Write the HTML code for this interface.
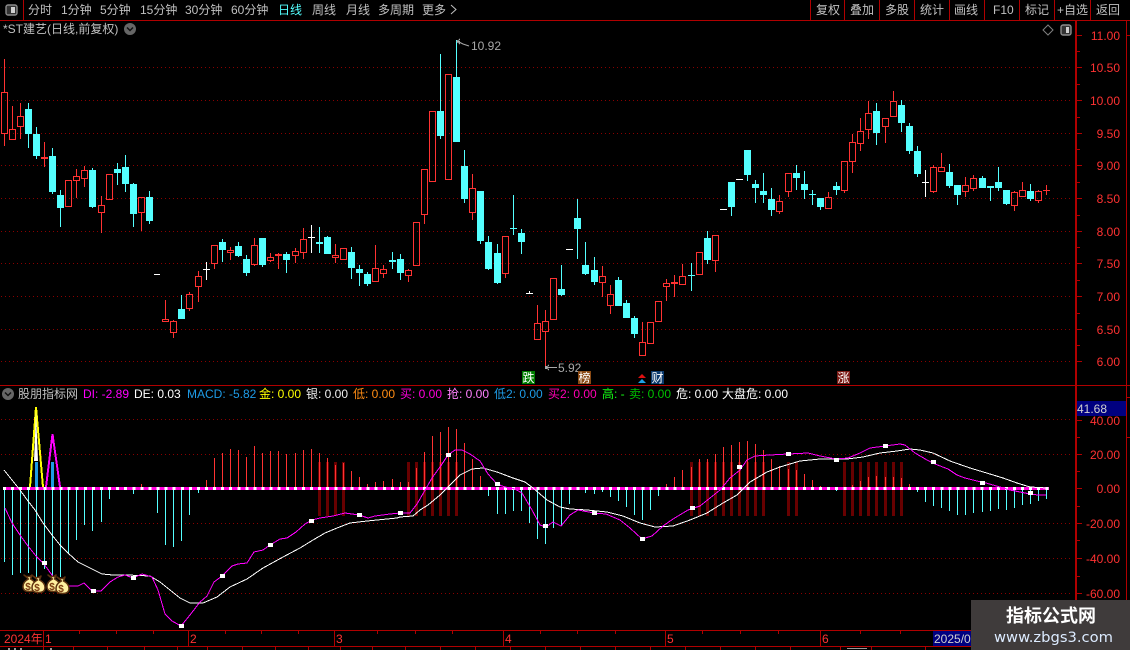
<!DOCTYPE html>
<html lang="zh"><head><meta charset="utf-8"><title>*ST建艺</title>
<style>
html,body{margin:0;padding:0;background:#000;width:1130px;height:650px;overflow:hidden}
svg{display:block;font-family:"Liberation Sans","Noto Sans CJK SC",sans-serif;font-size:12px}
.c{shape-rendering:crispEdges}
</style></head><body>
<svg width="1130" height="650" viewBox="0 0 1130 650" xmlns="http://www.w3.org/2000/svg">
<rect width="1130" height="650" fill="#000"/>

<!-- grid -->
<g class="c" stroke="#8a0000" stroke-width="1" stroke-dasharray="1 3" fill="none">
<path d="M1 67.5H1072M1 100.5H1072M1 133.5H1072M1 165.5H1072M1 198.5H1072M1 231.5H1072M1 263.5H1072M1 296.5H1072M1 329.5H1072M1 361.5H1072"/>
<path d="M1 419.5H1072M1 454.5H1072M1 523.5H1072M1 558.5H1072M1 593.5H1072"/>
</g>

<!-- candles: cyan -->
<g class="c">
<path stroke="#54ffff" fill="none" d="M28.5 103V148M36.5 127V159M52.5 148V194M60.5 190V227M92.5 168V208M117.5 163V185M125.5 155V192M133.5 183V227M149.5 191V224M181.5 295V319M222.5 239V262M238.5 242V257M246.5 255V276M262.5 238V267M286.5 252V273M319.5 227V253M327.5 236V254M351.5 247V279M359.5 265V286M367.5 272V286M392.5 252V269M400.5 254V280M440.5 54V139M456.5 40V142M464.5 150V203M480.5 191V244M488.5 236V270M497.5 244V284M513.5 195V235M510 228.5H517M521.5 229V254M561.5 265V296M577.5 199V259M585.5 242V275M594.5 257V285M618.5 277V306M626.5 300V318M634.5 316V338M691.5 263V291M688 275.5H695M707.5 231V264M731.5 182V216M747.5 150V181M755.5 180V203M763.5 173V203M771.5 188V216M796.5 165V190M804.5 171V199M812.5 190V205M809 194.5H816M820.5 198V210M836.5 182V195M876.5 103V145M901.5 100V132M909.5 123V154M917.5 146V177M949.5 164V188M957.5 185V205M982.5 176V188M990.5 186V201M998.5 167V191M1006.5 190V205M1030.5 184V201"/>
<path fill="#54ffff" d="M25 109H32V134H25ZM33 134H40V156H33ZM49 156H56V192H49ZM57 195H64V208H57ZM89 170H96V207H89ZM114 169H121V173H114ZM122 167H129V184H122ZM130 184H137V214H130ZM146 197H153V221H146ZM178 309H185V319H178ZM219 242H226V250H219ZM235 246H242V256H235ZM243 259H250V273H243ZM259 238H266V265H259ZM283 254H290V260H283ZM316 242H323V244H316ZM324 237H331V254H324ZM348 252H355V268H348ZM356 269H363V273H356ZM364 274H371V284H364ZM389 260H396V262H389ZM397 259H404V273H397ZM437 111H444V136H437ZM453 77H460V142H453ZM461 166H468V199H461ZM477 191H484V241H477ZM485 242H492V269H485ZM494 253H501V283H494ZM518 233H525V242H518ZM558 289H565V295H558ZM574 218H581V229H574ZM582 265H589V274H582ZM591 270H598V282H591ZM615 280H622V306H615ZM623 303H630V318H623ZM631 318H638V334H631ZM704 238H711V260H704ZM728 182H735V207H728ZM744 150H751V175H744ZM752 184H759V188H752ZM760 191H767V195H760ZM768 199H775V210H768ZM793 173H800V178H793ZM801 184H808V190H801ZM817 198H824V207H817ZM833 186H840V190H833ZM873 111H880V133H873ZM898 105H905V123H898ZM906 126H913V151H906ZM914 151H921V174H914ZM946 172H953V186H946ZM954 185H961V195H954ZM979 178H986V188H979ZM987 186H994V188H987ZM995 182H1002V188H995ZM1003 190H1010V204H1003ZM1027 191H1034V199H1027Z"/>
<!-- white doji -->
<path stroke="#fff" fill="none" d="M154 274.5H160M206.5 262V280M203 269.5H210M311.5 225V253M308 237.5H315M529.5 291V294M526 293.5H533M566 249.5H573M720 209.5H727M736 179.5H743M925.5 170V197M922 182.5H929"/>
<!-- red -->
<path stroke="#ff3232" fill="none" d="M4.5 59V92M4.5 134V146M1.5 92.5H7.5V133.5H1.5ZM12.5 106V129M9.5 129.5H15.5V139.5H9.5ZM20.5 103V116M20.5 127V139M17.5 116.5H23.5V126.5H17.5ZM44.5 142V157M44.5 159V167M41.5 157.5H47.5V158.5H41.5ZM65.5 180.5H71.5V206.5H65.5ZM76.5 169V176M76.5 181V198M73.5 176.5H79.5V180.5H73.5ZM84.5 166V170M84.5 179V187M81.5 170.5H87.5V178.5H81.5ZM101.5 196V205M101.5 213V233M98.5 205.5H104.5V212.5H98.5ZM106.5 174.5H112.5V199.5H106.5ZM141.5 213V231M138.5 197.5H144.5V212.5H138.5ZM165.5 300V319M162.5 319.5H168.5V321.5H162.5ZM173.5 320V321M173.5 333V338M170.5 321.5H176.5V332.5H170.5ZM189.5 292V294M189.5 309V311M186.5 294.5H192.5V308.5H186.5ZM198.5 271V276M198.5 287V302M195.5 276.5H201.5V286.5H195.5ZM214.5 264V269M211.5 245.5H217.5V263.5H211.5ZM230.5 247V250M230.5 253V260M227.5 250.5H233.5V252.5H227.5ZM254.5 238V245M254.5 265V266M251.5 245.5H257.5V264.5H251.5ZM270.5 253V257M270.5 261V262M267.5 257.5H273.5V260.5H267.5ZM278.5 253V254M278.5 256V269M275.5 254.5H281.5V255.5H275.5ZM295.5 248V251M295.5 256V263M292.5 251.5H298.5V255.5H292.5ZM303.5 228V239M303.5 253V259M300.5 239.5H306.5V252.5H300.5ZM335.5 244V255M335.5 258V263M332.5 255.5H338.5V257.5H332.5ZM340.5 248.5H346.5V259.5H340.5ZM375.5 245V268M372.5 268.5H378.5V281.5H372.5ZM383.5 265V269M383.5 274V278M380.5 269.5H386.5V273.5H380.5ZM408.5 269V270M408.5 276V282M405.5 270.5H411.5V275.5H405.5ZM413.5 222.5H419.5V265.5H413.5ZM424.5 215V224M421.5 169.5H427.5V214.5H421.5ZM429.5 111.5H435.5V181.5H429.5ZM445.5 74.5H451.5V179.5H445.5ZM472.5 174V188M472.5 213V220M469.5 188.5H475.5V212.5H469.5ZM505.5 274V278M502.5 236.5H508.5V273.5H502.5ZM537.5 305V323M534.5 323.5H540.5V339.5H534.5ZM545.5 310V321M545.5 332V367M542.5 321.5H548.5V331.5H542.5ZM550.5 278.5H556.5V319.5H550.5ZM602.5 266V276M602.5 283V297M599.5 276.5H605.5V282.5H599.5ZM610.5 285V294M610.5 306V314M607.5 294.5H613.5V305.5H607.5ZM642.5 322V342M639.5 342.5H645.5V355.5H639.5ZM647.5 322.5H653.5V343.5H647.5ZM655.5 301.5H661.5V321.5H655.5ZM666.5 279V283M666.5 287V301M663.5 283.5H669.5V286.5H663.5ZM674.5 275V282M674.5 284V297M671.5 282.5H677.5V283.5H671.5ZM682.5 264V276M679.5 276.5H685.5V284.5H679.5ZM696.5 252.5H702.5V274.5H696.5ZM715.5 261V272M712.5 235.5H718.5V260.5H712.5ZM779.5 195V201M779.5 212V214M776.5 201.5H782.5V211.5H776.5ZM788.5 192V197M785.5 173.5H791.5V191.5H785.5ZM828.5 192V197M825.5 197.5H831.5V208.5H825.5ZM844.5 191V193M841.5 161.5H847.5V190.5H841.5ZM852.5 134V142M852.5 162V173M849.5 142.5H855.5V161.5H849.5ZM860.5 118V131M860.5 144V151M857.5 131.5H863.5V143.5H857.5ZM868.5 101V113M868.5 130V139M865.5 113.5H871.5V129.5H865.5ZM885.5 127V143M882.5 118.5H888.5V126.5H882.5ZM893.5 91V101M890.5 101.5H896.5V116.5H890.5ZM933.5 165V167M933.5 192V193M930.5 167.5H936.5V191.5H930.5ZM941.5 153V167M938.5 167.5H944.5V171.5H938.5ZM965.5 177V185M965.5 192V197M962.5 185.5H968.5V191.5H962.5ZM973.5 175V178M973.5 189V191M970.5 178.5H976.5V188.5H970.5ZM1014.5 191V192M1014.5 206V211M1011.5 192.5H1017.5V205.5H1011.5ZM1022.5 182V190M1019.5 190.5H1025.5V196.5H1019.5ZM1038.5 190V191M1038.5 201V203M1035.5 191.5H1041.5V200.5H1035.5ZM1046.5 185V190M1046.5 191V195M1043 190.5H1050"/>
</g>

<!-- extreme markers -->
<g fill="none" stroke="#a8a8a8" stroke-width="1">
<path class="c" d="M456.5 41.5H460M457 41.5L460 44M457 41.5L460 39"/>
<path d="M459 42 L463 44 L469 46"/>
<path class="c" d="M546 367.5H557M546 367.5L549 365M546 367.5L549 370"/>
</g>
<rect class="c" x="545" y="366" width="2" height="3" fill="#a8a8a8"/>
<g fill="#a8a8a8" font-size="12">
<text x="471" y="50">10.92</text>
<text x="558" y="372">5.92</text>
</g>

<!-- event tags -->
<g class="c">
<rect x="522" y="371" width="13" height="13" fill="#007c00"/>
<rect x="578" y="371" width="13" height="13" fill="#8a4a14"/>
<rect x="651" y="371" width="13" height="13" fill="#0b3a6e"/>
<rect x="837" y="371" width="13" height="13" fill="#7a1a14"/>
</g>
<g fill="#fff" font-size="12" text-anchor="middle">
<text x="528.5" y="382">跌</text>
<text x="584.5" y="382">榜</text>
<text x="657.5" y="382">财</text>
<text x="843.5" y="382">涨</text>
</g>
<path d="M642 374l-4 4h8z" fill="#e01010"/>
<path d="M642 379l-4 4h8z" fill="#1ea0e6"/>

<!-- histogram -->
<g class="c" fill="none">
<path stroke="#680000" stroke-width="3" d="M319.5 462V516M327.5 462V516M335.5 462V516M343.5 462V516M408.5 462V516M416.5 462V516M424.5 462V516M432.5 462V516M440.5 462V516M448.5 462V516M456.5 462V516M691.5 462V516M699.5 462V516M707.5 462V516M715.5 462V516M723.5 462V516M731.5 462V516M739.5 462V516M747.5 462V516M755.5 462V516M763.5 462V516M788.5 462V516M796.5 462V516M844.5 462V516M852.5 462V516M860.5 462V516M868.5 462V516M876.5 462V516M885.5 462V516M893.5 462V516M901.5 462V516"/>
<path stroke="#ff3232" d="M141.5 488V484M206.5 488V480M214.5 488V458M222.5 488V453M230.5 488V449M238.5 488V450M246.5 488V457M254.5 488V446M262.5 488V453M270.5 488V451M278.5 488V451M286.5 488V454M295.5 488V453M303.5 488V450M311.5 488V449M319.5 488V453M327.5 488V458M335.5 488V465M343.5 488V463M351.5 488V471M359.5 488V477M367.5 488V484M375.5 488V482M383.5 488V481M392.5 488V479M400.5 488V482M408.5 488V482M416.5 488V468M424.5 488V452M432.5 488V436M440.5 488V432M448.5 488V427M456.5 488V429M464.5 488V443M472.5 488V459M480.5 488V476M666.5 488V484M674.5 488V477M682.5 488V470M691.5 488V467M699.5 488V459M707.5 488V459M715.5 488V454M723.5 488V447M731.5 488V445M739.5 488V442M747.5 488V441M755.5 488V444M763.5 488V450M771.5 488V459M779.5 488V466M788.5 488V469M796.5 488V470M804.5 488V474M812.5 488V480M820.5 488V486M852.5 488V485M860.5 488V481M868.5 488V477M876.5 488V476M885.5 488V477M893.5 488V477M901.5 488V478M909.5 488V484"/>
<path stroke="#54ffff" d="M4.5 488V562M12.5 488V575M20.5 488V573M28.5 488V573M36.5 488V577M44.5 488V569M52.5 488V577M60.5 488V577M68.5 488V554M76.5 488V540M84.5 488V525M92.5 488V531M101.5 488V522M109.5 488V499M133.5 488V494M157.5 488V513M165.5 488V545M173.5 488V547M181.5 488V541M189.5 488V515M198.5 488V493M488.5 488V496M497.5 488V514M505.5 488V514M513.5 488V511M521.5 488V511M529.5 488V523M537.5 488V539M545.5 488V544M553.5 488V528M561.5 488V525M569.5 488V504M585.5 488V493M594.5 488V494M602.5 488V492M610.5 488V497M618.5 488V501M626.5 488V507M634.5 488V515M642.5 488V520M650.5 488V510M658.5 488V496M836.5 488V491M917.5 488V492M925.5 488V502M933.5 488V506M941.5 488V508M949.5 488V511M957.5 488V515M965.5 488V515M973.5 488V513M982.5 488V512M990.5 488V511M998.5 488V509M1006.5 488V510M1014.5 488V508M1022.5 488V505M1030.5 488V504M1038.5 488V501M1046.5 488V499"/>
</g>

<!-- spikes -->
<path class="c" d="M35 462h3v26h-3zM51 462h3v26h-3z" fill="#1e9be6"/>
<path d="M30 487L36 407L43 487" fill="none" stroke="#ffff00" stroke-width="2" class="c"/>
<path d="M34 461L36 410L38 461Z" fill="#fff"/>
<path d="M46 487L52.5 434L60 487" fill="none" stroke="#ff00ff" stroke-width="2" class="c"/>

<!-- zero line -->
<rect class="c" x="3" y="487" width="1046" height="3" fill="#ff00dc"/>
<line class="c" x1="3" x2="1049" y1="488.5" y2="488.5" stroke="#fff" stroke-width="3" stroke-dasharray="3 5.08"/>

<!-- lines -->
<polyline class="c" fill="none" stroke="#fff" points="4,470 12,480 20,490 28,501 35,510 43,523 52,535 60,545 68,553 78,562 90,568 102,574 113,575 127,575 150,576 160,582 170,590 180,598 190,603 203,603 217,597 230,587 247,579 263,568 283,557 300,548 313,540 325,533 337,528 350,523 367,521 397,518 400,517 413,516 420,510 428,505 440,495 450,485 460,475 472,469 483,468 497,472 513,478 525,482 533,488 547,500 560,507 570,509 587,510 607,512 623,516 640,523 655,527 673,526 690,520 707,513 723,503 737,495 750,482 767,472 780,467 800,461 820,459 847,459 863,457 880,453 897,451 910,449 920,450 933,453 950,461 970,468 990,474 1003,478 1017,483 1030,487 1047,488"/>
<polyline class="c" fill="none" stroke="#ff00ff" points="5,508 12,523 20,535 28,546 36,556 44,564 52,575 60,585 68,586 78,586 84,583 92,591 101,591 110,582 118,577 125,575 133,578 142,574 152,577 158,590 165,614 172,621 181,626 190,615 200,602 207,596 214,582 222,576 232,566 238,564 247,563 254,552 263,550 270,545 280,539 287,538 296,532 305,524 312,520 320,518 333,516 345,513 359,515 368,518 375,516 390,514 400,513 410,513 417,504 424,492 432,478 440,467 448,455 455,450 462,450 470,454 480,461 488,474 497,484 505,487 515,489 522,493 532,510 540,525 546,527 553,522 561,526 570,515 578,510 594,513 606,514 620,520 630,528 642,539 652,536 663,526 673,519 688,510 700,506 710,498 720,490 730,478 740,470 747,460 755,456 770,455 788,454 808,453 820,456 836,459 848,458 860,453 870,448 885,446 900,444 905,445 915,453 927,460 935,464 948,469 957,475 965,478 977,481 986,483 1000,487 1010,490 1020,492 1030,494 1038,495 1046,495"/>
<path class="c" fill="#fff" d="M42 561h5v4h-5zM91 589h5v4h-5zM131 576h5v4h-5zM179 624h5v4h-5zM220 574h5v4h-5zM268 543h5v4h-5zM309 519h5v4h-5zM357 513h5v4h-5zM398 511h5v4h-5zM446 453h5v4h-5zM495 482h5v4h-5zM543 524h5v4h-5zM592 511h5v4h-5zM640 537h5v4h-5zM690 506h5v4h-5zM737 465h5v4h-5zM786 452h5v4h-5zM834 458h5v4h-5zM883 444h5v4h-5zM931 460h5v4h-5zM980 481h5v4h-5zM1028 491h5v4h-5z"/>

<!-- money bags -->
<g stroke="#5e3310" stroke-width="1.500" fill="#fff0a0" stroke-linejoin="round">
<path transform="translate(28,575)" d="M-4 0l2 1.500h4l2-1.500-1.500 4c4 2 5.500 5 5.500 7.500 0 4-3 5-6.500 5s-6.500-1-6.500-5c0-2.500 1.500-5.500 5.500-7.500z"/>
<path transform="translate(52,575)" d="M-4 0l2 1.500h4l2-1.500-1.500 4c4 2 5.500 5 5.500 7.500 0 4-3 5-6.500 5s-6.500-1-6.500-5c0-2.500 1.500-5.500 5.500-7.500z"/>
</g>
<g fill="#7a3a10" font-size="10" font-weight="bold" text-anchor="middle">
<text x="28" y="590">$</text><text x="52" y="590">$</text>
</g>
<g stroke="#5e3310" stroke-width="1.500" fill="#fff0a0" stroke-linejoin="round">
<path transform="translate(37,576)" d="M-4 0l2 1.500h4l2-1.500-1.500 4c4 2 5.500 5 5.500 7.500 0 4-3 5-6.500 5s-6.500-1-6.500-5c0-2.500 1.500-5.500 5.500-7.500z"/>
<path transform="translate(61,577)" d="M-4 0l2 1.500h4l2-1.500-1.500 4c4 2 5.500 5 5.500 7.500 0 4-3 5-6.500 5s-6.500-1-6.500-5c0-2.500 1.500-5.500 5.500-7.500z"/>
</g>
<g fill="#7a3a10" font-size="10" font-weight="bold" text-anchor="middle">
<text x="37" y="591">$</text><text x="61" y="592">$</text>
</g>

<!-- frame -->
<g class="c" fill="#b00000">
<rect x="0" y="20" width="1130" height="1"/>
<rect x="23" y="0" width="1" height="20"/>
<rect x="810" y="0" width="1" height="20"/><rect x="844" y="0" width="1" height="20"/><rect x="879" y="0" width="1" height="20"/><rect x="914" y="0" width="1" height="20"/><rect x="949" y="0" width="1" height="20"/><rect x="984" y="0" width="1" height="20"/><rect x="1019" y="0" width="1" height="20"/><rect x="1054" y="0" width="1" height="20"/><rect x="1090" y="0" width="1" height="20"/>
<rect x="0" y="385" width="1130" height="1"/>
<rect x="1075" y="20" width="2" height="630"/>
<rect x="1126" y="20" width="1" height="580"/>
<rect x="0" y="630" width="972" height="1"/>
<rect x="0" y="646" width="972" height="1"/>
<rect x="43" y="630" width="1" height="16"/><rect x="188" y="630" width="1" height="16"/><rect x="334" y="630" width="1" height="16"/><rect x="503" y="630" width="1" height="16"/><rect x="665" y="630" width="1" height="16"/><rect x="820" y="630" width="1" height="16"/>
</g>
<path class="c" stroke="#b00000" fill="none" d="M79.5 631v3M116.5 631v3M153.5 631v3M225.5 631v3M261.5 631v3M298.5 631v3M377.5 631v3M415.5 631v3M452.5 631v3M540.5 631v3M577.5 631v3M615.5 631v3M702.5 631v3M740.5 631v3M778.5 631v3M860.5 631v3M900.5 631v3M43.5 647v3M73.5 647v3M107.5 647v3M144.5 647v3M177.5 647v3M207.5 647v3M242.5 647v3M275.5 647v3M308.5 647v3M340.5 647v3M372.5 647v3M405.5 647v3M440.5 647v3M475.5 647v3M510.5 647v3M545.5 647v3M580.5 647v3M615.5 647v3M650.5 647v3M685.5 647v3M720.5 647v3M755.5 647v3M790.5 647v3M840.5 647v3M871.5 647v3M925.5 647v3M1077 35.5h5M1077 67.5h5M1077 100.5h5M1077 133.5h5M1077 165.5h5M1077 198.5h5M1077 231.5h5M1077 263.5h5M1077 296.5h5M1077 329.5h5M1077 361.5h5M1077 51.5h3M1077 84.5h3M1077 117.5h3M1077 149.5h3M1077 182.5h3M1077 215.5h3M1077 247.5h3M1077 280.5h3M1077 313.5h3M1077 345.5h3M1077 420.5h5M1077 454.5h5M1077 488.5h5M1077 523.5h5M1077 558.5h5M1077 593.5h5M1077 437.5h3M1077 471.5h3M1077 506.5h3M1077 540.5h3M1077 576.5h3M1127 35.5h3M1127 397.5h3M1127 437.5h3"/>

<!-- top bar icon -->
<rect x="6" y="5" width="11" height="10" rx="2" fill="#333" stroke="#8c8c8c" stroke-width="1.4"/>
<rect class="c" x="11" y="7" width="4" height="6" fill="#d0d0d0"/>

<!-- top bar text -->
<g fill="#c0c0c0">
<text x="28" y="14">分时</text><text x="61" y="14">1分钟</text><text x="100" y="14">5分钟</text><text x="140" y="14">15分钟</text><text x="185" y="14">30分钟</text><text x="231" y="14">60分钟</text>
<text x="278" y="14" fill="#54ffff">日线</text>
<text x="312" y="14">周线</text><text x="346" y="14">月线</text><text x="378" y="14">多周期</text><text x="422" y="14">更多</text>
<path d="M451 5l5 4.500-5 4.500" fill="none" stroke="#c0c0c0"/>
<text x="816" y="14">复权</text><text x="850" y="14">叠加</text><text x="885" y="14">多股</text><text x="920" y="14">统计</text><text x="954" y="14">画线</text><text x="993" y="14">F10</text><text x="1025" y="14">标记</text><text x="1057" y="14">+自选</text><text x="1096" y="14">返回</text>
</g>

<!-- title -->
<text x="3" y="33" fill="#c0c0c0">*ST建艺(日线,前复权)</text>
<circle cx="130" cy="29" r="6" fill="#666"/>
<path d="M127 27.500l3 3 3-3" fill="none" stroke="#111" stroke-width="1.500"/>
<path d="M1048 25l5 5-5 5-5-5z" fill="none" stroke="#808080"/>
<rect x="1061" y="25" width="10" height="10" rx="2" fill="#333" stroke="#8c8c8c" stroke-width="1.400"/>
<rect class="c" x="1066" y="27" width="3" height="6" fill="#d0d0d0"/>

<!-- axis labels -->
<g fill="#ff3232" text-anchor="end">
<text x="1120" y="40">11.00</text><text x="1120" y="72">10.50</text><text x="1120" y="105">10.00</text><text x="1120" y="138">9.50</text><text x="1120" y="170">9.00</text><text x="1120" y="203">8.50</text><text x="1120" y="236">8.00</text><text x="1120" y="268">7.50</text><text x="1120" y="301">7.00</text><text x="1120" y="334">6.50</text><text x="1120" y="366">6.00</text>
<text x="1120" y="425">40.00</text><text x="1120" y="459">20.00</text><text x="1120" y="493">0.00</text><text x="1120" y="528">-20.00</text><text x="1120" y="563">-40.00</text><text x="1120" y="598">-60.00</text>
</g>
<rect class="c" x="1077" y="401" width="49" height="15" fill="#000080"/>
<text x="1077" y="413" fill="#d0d0d0">41.68</text>

<!-- sub title -->
<circle cx="8" cy="394" r="6" fill="#666"/>
<path d="M5 392.500l3 3 3-3" fill="none" stroke="#111" stroke-width="1.500"/>
<g>
<text x="18" y="398" fill="#c0c0c0">股朋指标网</text>
<text x="83" y="398" fill="#ff00ff">DI: -2.89</text>
<text x="134" y="398" fill="#ffffff">DE: 0.03</text>
<text x="187" y="398" fill="#1e9be6">MACD: -5.82</text>
<text x="259" y="398" fill="#ffff00">金: 0.00</text>
<text x="306" y="398" fill="#f0f0f0">银: 0.00</text>
<text x="353" y="398" fill="#ff8c14">低: 0.00</text>
<text x="400" y="398" fill="#ff00dc">买: 0.00</text>
<text x="447" y="398" fill="#ff80ff">抢: 0.00</text>
<text x="494" y="398" fill="#1e9be6">低2: 0.00</text>
<text x="548" y="398" fill="#ff00b4">买2: 0.00</text>
<text x="602" y="398" fill="#14ff14">高: -</text>
<text x="629" y="398" fill="#00c000">卖: 0.00</text>
<text x="676" y="398" fill="#ffffff">危: 0.00</text>
<text x="722" y="398" fill="#ffffff">大盘危: 0.00</text>
</g>

<!-- time labels -->
<g fill="#ff3232">
<text x="4" y="643">2024年</text><text x="45" y="643">1</text><text x="190" y="643">2</text><text x="336" y="643">3</text><text x="505" y="643">4</text><text x="667" y="643">5</text><text x="822" y="643">6</text>
</g>
<rect class="c" x="933" y="631" width="40" height="15" fill="#000080"/>
<text x="934" y="643" fill="#d0d0d0">2025/0</text>
<path class="c" fill="#9a9a9a" d="M8 648h2v2H8zM14 648h2v2h-2zM20 648h2v2h-2zM50 648h2v2h-2zM847 648h20v1h-20z"/>

<!-- watermark -->
<rect class="c" x="971" y="600" width="159" height="50" fill="#3f3b3b"/>
<text x="1006" y="622" fill="#fff" font-size="18" font-weight="bold" textLength="90" style="font-family:'Noto Sans CJK SC',sans-serif">指标公式网</text>
<text x="994" y="642" fill="#dcebff" style="font-family:'DejaVu Sans',sans-serif" font-size="14" textLength="119" lengthAdjust="spacingAndGlyphs">www.zbgs3.com</text>
</svg>
</body></html>
